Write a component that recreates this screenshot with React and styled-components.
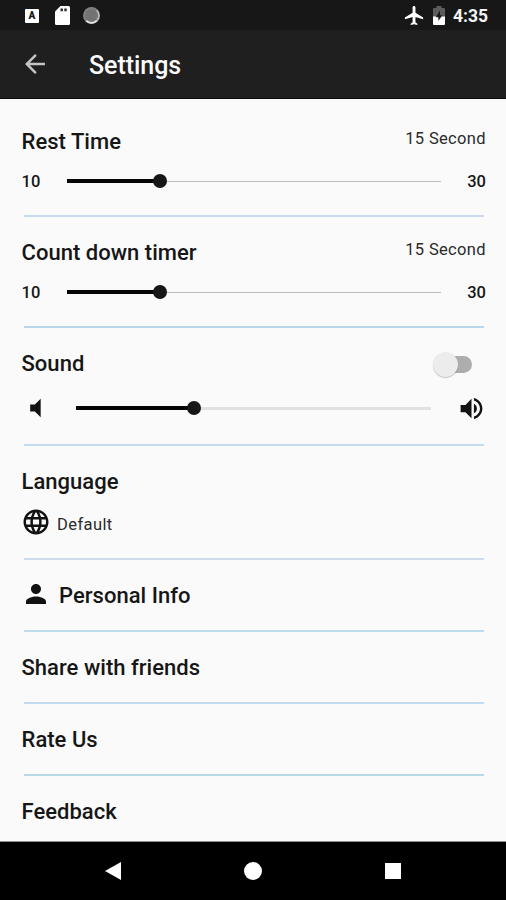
import {useState} from 'react'
import styled, {createGlobalStyle} from 'styled-components'

const GlobalStyle = createGlobalStyle`
  * {
    box-sizing: border-box;
  }
  body {
    margin: 0;
    background-color: #fafafa;
    font-family: Roboto, "Noto Sans", sans-serif;
  }
`;

const Container = styled.div`
  width: 506px;
  height: 900px;
  display: flex;
  flex-direction: column;
  overflow: hidden;
  color: #161616;
  background-color: #fafafa;
`;

const StatusBar = styled.div`
  height: 30px;
  flex-shrink: 0;
  display: flex;
  align-items: center;
  justify-content: space-between;
  padding: 1px 18px 0 25px;
  background-color: #171717;
`;

const StatusGroup = styled.div`
  display: flex;
  align-items: center;
  gap: ${(props) => props.$gap};
`;

const Clock = styled.span`
  margin-left: 1px;
  font-size: 17.5px;
  font-weight: 700;
  line-height: 20px;
  color: #f4f4f4;
`;

const Badge = styled.span`
  width: 14px;
  height: 14px;
  margin-right: 1px;
  border-radius: 1px;
  display: flex;
  align-items: center;
  justify-content: center;
  font-size: 10px;
  font-weight: 900;
  color: #171717;
  background-color: #fff;
`;

const Spinner = styled.span`
  width: 17px;
  height: 17px;
  margin-left: -2px;
  border-radius: 50%;
  border: 2px solid #808080;
  border-right-color: #b4b4b4;
  border-bottom-color: #e4e4e4;
  background-color: #737373;
`;

const Toolbar = styled.header`
  height: 69px;
  flex-shrink: 0;
  display: flex;
  align-items: center;
  gap: 39px;
  padding: 0 20px 0 20px;
  background-color: #1f1f1f;
  border-bottom: 1px solid #0a0a0a;
`;

const PageTitle = styled.h1`
  margin: 4px 0 0;
  font-size: 25px;
  font-weight: 500;
  line-height: 30px;
  letter-spacing: -0.05px;
  color: #fafafa;
`;

const Content = styled.main`
  flex: 1;
  min-height: 0;
  padding-top: 7px;
  overflow: hidden;
  border-bottom: 1px solid #8f8f8f;
`;

const Section = styled.section`
  height: ${(props) => props.$height}px;
  padding: 22px 20px 0 21.5px;
  display: flex;
  flex-direction: column;

  &::after {
    content: "";
    height: 2px;
    margin: auto 2px 0;
    flex-shrink: 0;
    background-color: ${(props) => props.$line || "#c7d9ec"};
  }

  &:last-child::after {
    display: none;
  }
`;

const Heading = styled.div`
  height: 28px;
  flex-shrink: 0;
  display: flex;
  align-items: center;
  justify-content: space-between;
`;

const Title = styled.h2`
  margin: ${(props) => props.$top || 0}px 0 0;
  font-size: 22px;
  font-weight: 500;
  line-height: 28px;
  letter-spacing: 0.03px;
`;

const Value = styled.span`
  margin-top: -6px;
  font-size: 16.5px;
  line-height: 22px;
  letter-spacing: 0.35px;
  color: #2a2a2a;
`;

const SliderRow = styled.div`
  height: 30px;
  margin-top: ${(props) => props.$top}px;
  display: flex;
  align-items: center;
`;

const Limit = styled.span`
  width: ${(props) => props.$width}px;
  font-size: 16.5px;
  font-weight: 500;
  text-align: ${(props) => props.$align || "left"};
`;

const Track = styled.div`
  flex: 1;
  height: 14px;
  display: flex;
  align-items: center;
`;

const Fill = styled.div`
  height: 4px;
  background-color: #050505;
`;

const Thumb = styled.div`
  width: 14px;
  height: 14px;
  margin: 0 -7px;
  border-radius: 50%;
  background-color: #161616;
  z-index: 1;
`;

const Rest = styled.div`
  flex: 1;
  height: ${(props) => props.$size}px;
  background-color: ${(props) => (props.$size > 1 ? "#e1e1e1" : "#bdbdbd")};
`;

const VolumeSlot = styled.div`
  width: ${(props) => props.$width}px;
  display: flex;
  justify-content: ${(props) => props.$align};
`;

const Switch = styled.button`
  width: 38px;
  height: 25px;
  margin: 1px 14px 0 0;
  padding: 0 0 0 5px;
  border: 0;
  display: flex;
  align-items: center;
  background: none;
`;

const SwitchTrack = styled.span`
  width: 33px;
  height: 17px;
  border-radius: 9px;
  display: flex;
  align-items: center;
  justify-content: ${(props) => (props.$on ? "flex-end" : "flex-start")};
  background-color: #adadad;
`;

const SwitchThumb = styled.span`
  width: 25px;
  height: 25px;
  margin-left: -6px;
  flex-shrink: 0;
  border-radius: 50%;
  background-color: #ececec;
  box-shadow: 0 1px 1px rgba(0, 0, 0, 0.22);
`;

const IconRow = styled.div`
  display: flex;
  align-items: center;
  gap: ${(props) => props.$gap}px;
  margin: ${(props) => props.$margin};
`;

const Label = styled.span`
  margin-top: 6px;
  font-size: 16.5px;
  line-height: 20px;
  letter-spacing: 0.4px;
  color: #2a2a2a;
`;

const NavBar = styled.nav`
  height: 58px;
  flex-shrink: 0;
  display: flex;
  align-items: center;
  justify-content: space-between;
  padding: 0 105px;
  background-color: #000;
`;

const icons = {
  back: "M20 11H7.83l5.59-5.59L12 4l-8 8 8 8 1.41-1.41L7.83 13H20v-2z",
  plane: "M21 16v-2l-8-5V3.5c0-.83-.67-1.5-1.5-1.5S10 2.67 10 3.5V9l-8 5v2l8-2.5V19l-2 1.5V22l3.5-1 3.5 1v-1.5L13 19v-5.5l8 2.5z",
  mute: "M7 9v6h4l5 5V4l-5 5H7z",
  volume: "M3 9v6h4l5 5V4L7 9H3zm13.5 3c0-1.77-1.02-3.29-2.5-4.03v8.05c1.48-.73 2.5-2.25 2.5-4.02zM14 3.23v2.06c2.89.86 5 3.54 5 6.71s-2.11 5.85-5 6.71v2.06c4.01-.91 7-4.49 7-8.77s-2.99-7.86-7-8.77z",
  globe: "M11.99 2C6.47 2 2 6.48 2 12s4.47 10 9.99 10C17.52 22 22 17.52 22 12S17.52 2 11.99 2zm6.93 6h-2.95c-.32-1.25-.78-2.45-1.38-3.56 1.84.63 3.37 1.91 4.33 3.56zM12 4.04c.83 1.2 1.48 2.53 1.91 3.96h-3.82c.43-1.43 1.08-2.76 1.91-3.96zM4.26 14C4.1 13.36 4 12.69 4 12s.1-1.36.26-2h3.38c-.08.66-.14 1.32-.14 2 0 .68.06 1.34.14 2H4.26zm.82 2h2.95c.32 1.25.78 2.45 1.38 3.56-1.84-.63-3.37-1.9-4.33-3.56zm2.95-8H5.08c.96-1.66 2.49-2.93 4.33-3.56C8.81 5.55 8.35 6.75 8.03 8zM12 19.96c-.83-1.2-1.48-2.53-1.91-3.96h3.82c-.43 1.43-1.08 2.76-1.91 3.96zM14.34 14H9.66c-.09-.66-.16-1.32-.16-2 0-.68.07-1.35.16-2h4.68c.09.65.16 1.32.16 2 0 .68-.07 1.34-.16 2zm.25 5.56c.6-1.11 1.06-2.31 1.38-3.56h2.95c-.96 1.65-2.49 2.93-4.33 3.56zM16.36 14c.08-.66.14-1.32.14-2 0-.68-.06-1.34-.14-2h3.38c.16.64.26 1.31.26 2s-.1 1.36-.26 2h-3.38z",
  person: "M12 12c2.21 0 4-1.79 4-4s-1.79-4-4-4-4 1.79-4 4 1.79 4 4 4zm0 2c-2.67 0-8 1.34-8 4v2h16v-2c0-2.66-5.33-4-8-4z",
}

const Icon = ({name, size, color}) => (
  <svg width={size} height={size} viewBox="0 0 24 24" fill={color || "#121212"}>
    <path d={icons[name]} />
  </svg>
)

const SdCard = () => (
  <svg width="15" height="19" viewBox="0 0 15 19">
    <path fill="#fff" d="M5.5 0H13.5Q15 0 15 1.5V17.5Q15 19 13.5 19H1.5Q0 19 0 17.5V5.5Z" />
    <path fill="#2b2b2b" d="M5.5 2.5h2.4v2.8H5.5zM9.3 2.5h2.4v2.8H9.3z" />
  </svg>
)

const Battery = () => (
  <svg width="12" height="19" viewBox="0 0 12 19">
    <path fill="#5c5c5c" d="M3.5 0h5v2H11q1 0 1 1v8H0V3q0-1 1-1h2.5z" />
    <path fill="#fff" d="M0 10.5h12V18q0 1-1 1H1q-1 0-1-1z" />
    <path fill="#171717" d="M7 4.5 2.8 11.3H5.4V15L9.3 9.3H7z" />
  </svg>
)

const Slider = ({percent, thickness}) => (
  <Track>
    <Fill style={{width: `${percent}%`}} />
    <Thumb />
    <Rest $size={thickness} />
  </Track>
)

const timers = [
  {id: 1, title: "Rest Time", line: "#c9d9ee", height: 111},
  {id: 2, title: "Count down timer", line: "#b9d5ea", height: 111},
]

const links = [
  {id: 1, title: "Share with friends", line: "#c3dbf0"},
  {id: 2, title: "Rate Us", line: "#b9d9e6"},
  {id: 3, title: "Feedback"},
]

const App = () => {
  const [sound, setSound] = useState(false)

  return (
    <Container>
      <GlobalStyle />
      <StatusBar>
        <StatusGroup $gap="15px">
          <Badge>A</Badge>
          <SdCard />
          <Spinner />
        </StatusGroup>
        <StatusGroup $gap="7px">
          <Icon name="plane" size={23} color="#fff" />
          <Battery />
          <Clock>4:35</Clock>
        </StatusGroup>
      </StatusBar>
      <Toolbar>
        <Icon name="back" size={30} color="#c4c4c4" />
        <PageTitle>Settings</PageTitle>
      </Toolbar>
      <Content>
        {timers.map((item) => (
          <Section key={item.id} $height={item.height} $line={item.line}>
            <Heading>
              <Title>{item.title}</Title>
              <Value>15 Second</Value>
            </Heading>
            <SliderRow $top={10}>
              <Limit $width={45}>10</Limit>
              <Slider percent={25} thickness={1} />
              <Limit $width={45} $align="right">30</Limit>
            </SliderRow>
          </Section>
        ))}
        <Section $height={118} $line="#c3dbf0">
          <Heading>
            <Title>Sound</Title>
            <Switch onClick={() => setSound(!sound)}>
              <SwitchTrack $on={sound}>
                <SwitchThumb />
              </SwitchTrack>
            </Switch>
          </Heading>
          <SliderRow $top={15}>
            <VolumeSlot $width={54.5} $align="flex-start">
              <Icon name="mute" size={28} />
            </VolumeSlot>
            <Slider percent={33.3} thickness={3} />
            <VolumeSlot $width={55} $align="flex-end">
              <Icon name="volume" size={29} />
            </VolumeSlot>
          </SliderRow>
        </Section>
        <Section $height={114} $line="#cddbed">
          <Heading>
            <Title>Language</Title>
          </Heading>
          <IconRow $gap={6} $margin="11px 0 0 -0.5px">
            <Icon name="globe" size={30} />
            <Label>Default</Label>
          </IconRow>
        </Section>
        <Section $height={72} $line="#bfdcec">
          <IconRow $gap={8} $margin="-4px 0 0 -0.5px">
            <Icon name="person" size={30} />
            <Title $top={4}>Personal Info</Title>
          </IconRow>
        </Section>
        {links.map((item) => (
          <Section key={item.id} $height={72} $line={item.line}>
            <Heading>
              <Title>{item.title}</Title>
            </Heading>
          </Section>
        ))}
      </Content>
      <NavBar>
        <svg width="16" height="18" viewBox="0 0 16 18">
          <path fill="#fff" d="M16 0v18L0 9z" />
        </svg>
        <svg width="18" height="18" viewBox="0 0 18 18">
          <circle cx="9" cy="9" r="9" fill="#fff" />
        </svg>
        <svg width="16" height="16" viewBox="0 0 16 16">
          <rect width="16" height="16" fill="#fff" />
        </svg>
      </NavBar>
    </Container>
  );
};

export default App
